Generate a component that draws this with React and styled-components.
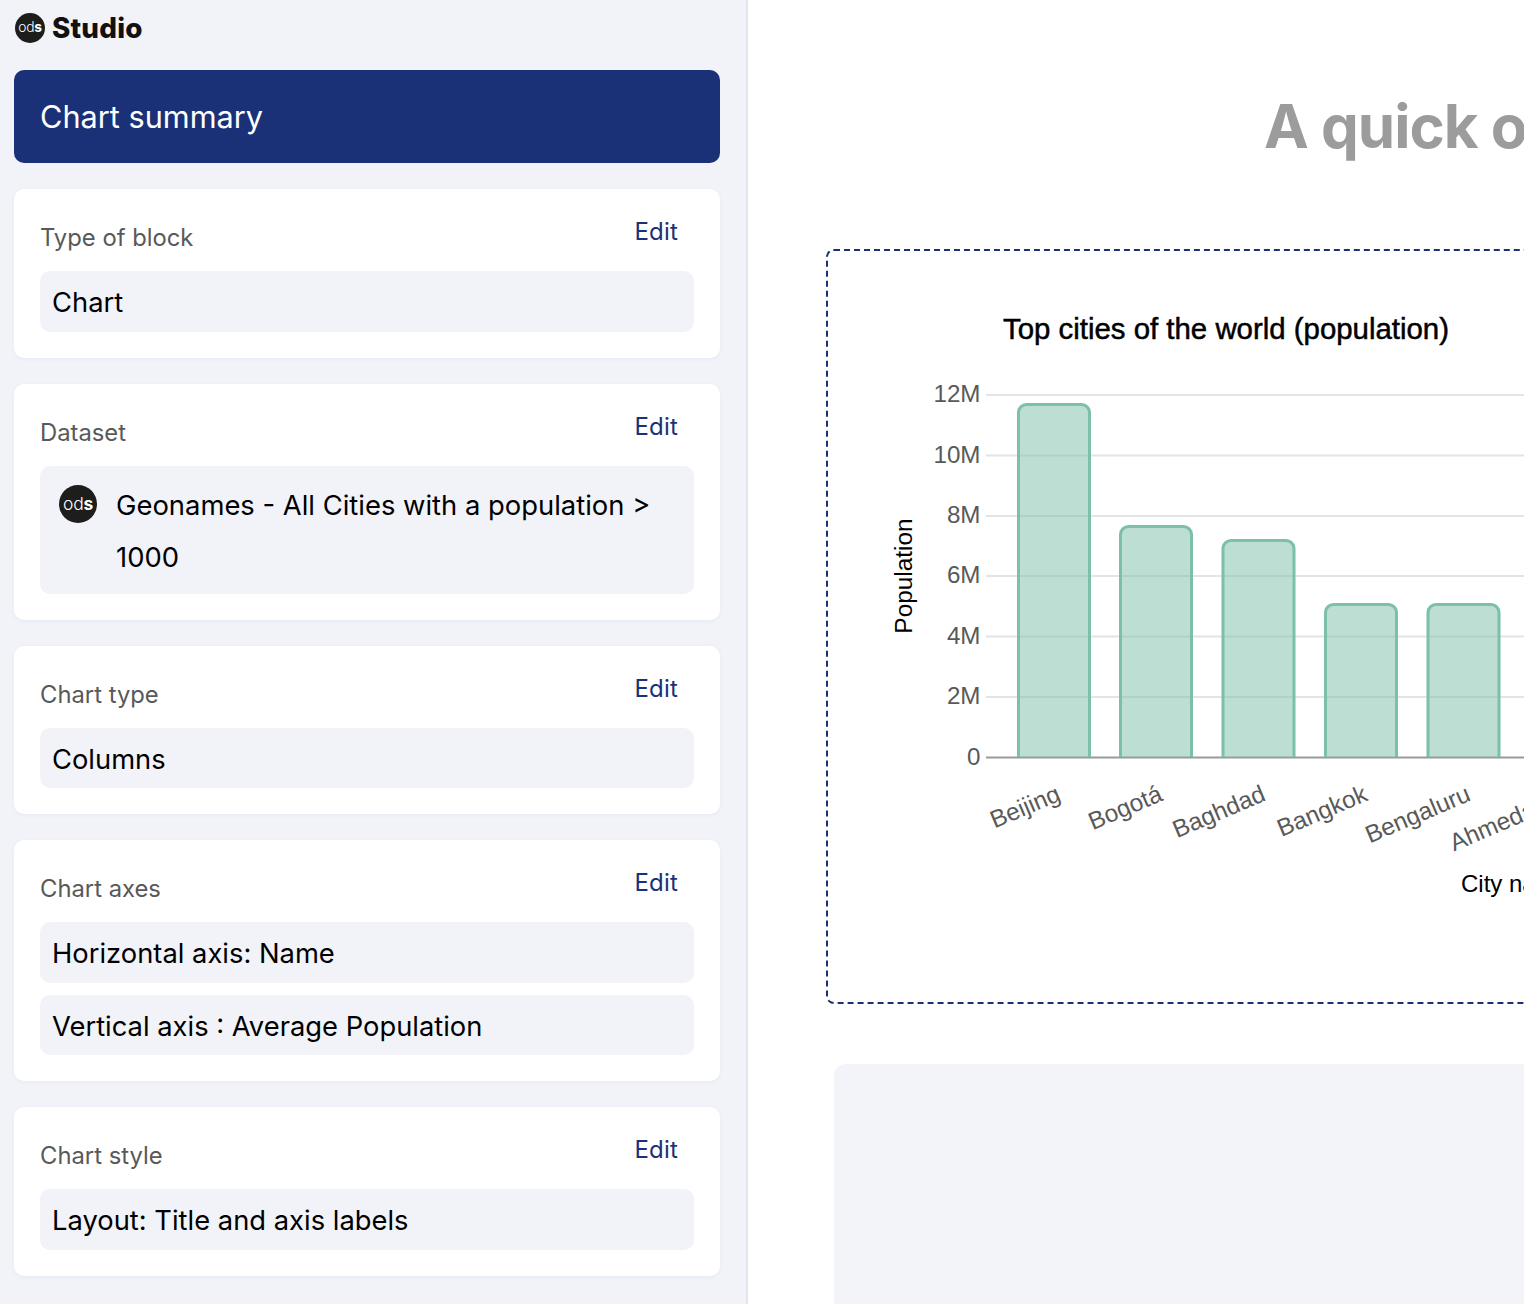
import React from "react";
import styled, { createGlobalStyle } from "styled-components";

const Global = createGlobalStyle`
  html, body { margin: 0; padding: 0; background: #fff; overflow: hidden; height: 1304px; }
  * { box-sizing: border-box; }
  body { font-family: Inter, "Liberation Sans", sans-serif; }
`;
const Page = styled.div`display: flex; width: 1524px; height: 1304px; overflow: hidden;`;
const Sidebar = styled.aside`
  flex: 0 0 748px; height: 1304px; background: #f1f3f9; border-right: 2px solid #e1e5f0;
  padding: 0 26px 0 14px; display: flex; flex-direction: column;
`;
const Brand = styled.div`
  height: 70px; padding: 13px 0 0 1px; display: flex; align-items: flex-start; gap: 7px;
`;
const BrandName = styled.span`
  font-size: 27.8px; font-weight: 800; line-height: 30px; color: #111; letter-spacing: 0.2px;
`;
const LogoDisc = styled.span`
  width: ${p => p.$size}px; height: ${p => p.$size}px; flex: none; border-radius: 50%;
  background: #1d1d1b; color: #fff; display: inline-flex; align-items: center; justify-content: center;
  font-size: ${p => p.$size * 0.46}px; line-height: 1; letter-spacing: -0.3px;
  b { font-weight: 700; }
  span { font-weight: 300; }
`;
const SummaryBar = styled.h2`
  margin: 0 0 26px; height: 93px; border-radius: 10px; background: #1a3177; color: #fff;
  font-size: 30.7px; font-weight: 400; display: flex; align-items: center; padding-left: 26px;
`;
const Cards = styled.div`display: flex; flex-direction: column; gap: 26px;`;
const Card = styled.section`
  background: #fff; border-radius: 10px; padding: 26px; box-shadow: 0 1px 4px rgba(30, 50, 110, 0.05);
`;
const CardHead = styled.div`
  height: 56px; display: flex; justify-content: space-between; align-items: flex-start;
`;
const CardLabel = styled.h3`
  margin: 7px 0 0; font-size: 23.8px; line-height: 32px; font-weight: 400; color: #595959;
`;
const EditButton = styled.button`
  border: 0; background: none; padding: 1px 16px 0 0; font: 400 24px/32px Inter, sans-serif;
  letter-spacing: 0.2px; color: #1a3177;
`;
const Values = styled.div`display: flex; flex-direction: column; gap: 12px;`;
const Value = styled.div`
  height: 60.5px; padding: 0 12px; border-radius: 10px; background: #f1f3f9;
  font-size: 27.35px; line-height: 64px; color: #000;
`;
const DatasetValue = styled.div`
  height: 128px; padding: 19px 20px 0 19px; border-radius: 10px; background: #f1f3f9;
  display: flex; gap: 19px; font-size: 27.4px; line-height: 52px; color: #000;
`;
const DatasetName = styled.span`margin-top: -6px;`;
const Main = styled.main`flex: 1; min-width: 0; overflow: hidden; padding-left: 78px;`;
const Heading = styled.h1`
  margin: 0; height: 249px; padding: 87px 0 0 438px; font-size: 60px; line-height: 78px;
  letter-spacing: -1px; font-weight: 700; color: #9c9c9c; white-space: nowrap;
`;
const ChartFrame = styled.div`
  width: 900px; height: 755px; border: 2px dashed #1a3177; border-radius: 8px; margin-bottom: 60px;
`;
const ChartSvg = styled.svg`display: block; font-family: "Liberation Sans", Arial, sans-serif;`;
const Placeholder = styled.div`
  width: 900px; height: 300px; margin-left: 8px; background: #f3f4f9; border-radius: 12px 12px 0 0;
`;

const OdsLogo = ({ size }) => (
  <LogoDisc $size={size}><span>od</span><b>s</b></LogoDisc>
);

const ticks = [["12M", 395], ["10M", 455.5], ["8M", 516], ["6M", 576], ["4M", 636.5], ["2M", 697], ["0", 757.5]];
const bars = [
  { x: 1018.5, w: 71, top: 404.5, name: "Beijing", lx: 1062, ly: 800 },
  { x: 1120.5, w: 71, top: 526.5, name: "Bogotá", lx: 1164, ly: 800 },
  { x: 1223, w: 71, top: 540.5, name: "Baghdad", lx: 1267, ly: 800 },
  { x: 1325.5, w: 71, top: 604.5, name: "Bangkok", lx: 1369, ly: 800 },
  { x: 1428, w: 71, top: 604.5, name: "Bengaluru", lx: 1472, ly: 800 },
  { x: 1530.5, w: 71, top: 640, name: "Ahmedabad", lx: 1575, ly: 800 },
];
const barPath = (x, w, top, base) =>
  `M${x} ${base}V${top + 8}a8 8 0 0 1 8-8H${x + w - 8}a8 8 0 0 1 8 8V${base}`;

const Chart = () => (
  <ChartSvg width="896" height="751" viewBox="828 251 896 751">
    <text x="1226" y="339" textAnchor="middle" fontSize="29.4" fill="#000" stroke="#000" strokeWidth="0.5">
      Top cities of the world (population)
    </text>
    <text transform="translate(912 576) rotate(-90)" textAnchor="middle" fontSize="24.4" fill="#000">Population</text>
    {ticks.map(([label, y]) => (
      <g key={label}>
        <line x1="986" x2="1725" y1={y} y2={y} stroke={label === "0" ? "#999" : "#e4e4e4"} strokeWidth="2" />
        <text x="980.5" y={y + 7} textAnchor="end" fontSize="24.2" fill="#595959">{label}</text>
      </g>
    ))}
    {bars.map(b => (
      <g key={b.name}>
        <path d={barPath(b.x, b.w, b.top, 757)} fill="rgba(124,192,168,0.5)" stroke="#7cc0a8" strokeWidth="3" />
        <text transform={`translate(${b.lx} ${b.ly}) rotate(-23)`} textAnchor="end" fontSize="24.4" fill="#595959">{b.name}</text>
      </g>
    ))}
    <text x="1461" y="892" fontSize="24" fill="#000">City name</text>
  </ChartSvg>
);

const SummaryCard = ({ label, children }) => (
  <Card>
    <CardHead>
      <CardLabel>{label}</CardLabel>
      <EditButton>Edit</EditButton>
    </CardHead>
    {children}
  </Card>
);

export default function App() {
  return (
    <Page>
      <Global />
      <Sidebar>
        <Brand>
          <OdsLogo size={30} />
          <BrandName>Studio</BrandName>
        </Brand>
        <SummaryBar>Chart summary</SummaryBar>
        <Cards>
          <SummaryCard label="Type of block"><Value>Chart</Value></SummaryCard>
          <SummaryCard label="Dataset">
            <DatasetValue>
              <OdsLogo size={38} />
              <DatasetName>Geonames - All Cities with a population &gt; 1000</DatasetName>
            </DatasetValue>
          </SummaryCard>
          <SummaryCard label="Chart type"><Value>Columns</Value></SummaryCard>
          <SummaryCard label="Chart axes">
            <Values>
              <Value>Horizontal axis: Name</Value>
              <Value>Vertical axis : Average Population</Value>
            </Values>
          </SummaryCard>
          <SummaryCard label="Chart style"><Value>Layout: Title and axis labels</Value></SummaryCard>
        </Cards>
      </Sidebar>
      <Main>
        <Heading>A quick overview</Heading>
        <ChartFrame><Chart /></ChartFrame>
        <Placeholder />
      </Main>
    </Page>
  );
}
